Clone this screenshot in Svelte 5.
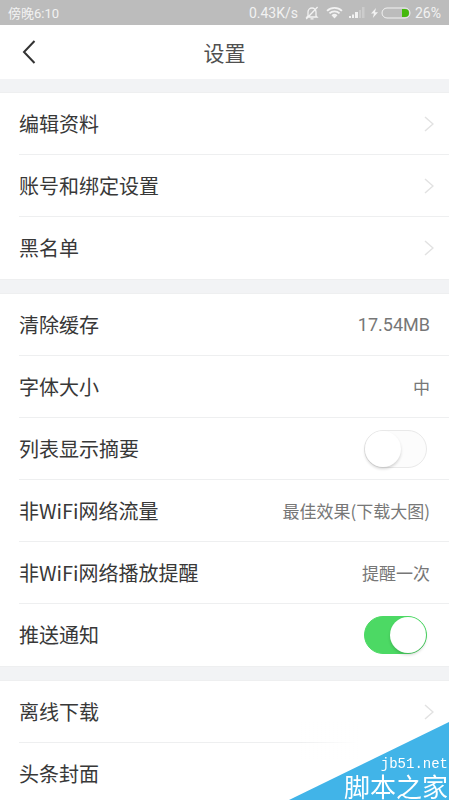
<script>
	let groups = $state([
		[
			{ label: '编辑资料', type: 'link' },
			{ label: '账号和绑定设置', type: 'link' },
			{ label: '黑名单', type: 'link' },
		],
		[
			{ label: '清除缓存', type: 'value', value: '17.54MB', latin: true },
			{ label: '字体大小', type: 'value', value: '中' },
			{ label: '列表显示摘要', type: 'switch', checked: false },
			{ label: '非WiFi网络流量', type: 'value', value: '最佳效果(下载大图)' },
			{ label: '非WiFi网络播放提醒', type: 'value', value: '提醒一次' },
			{ label: '推送通知', type: 'switch', checked: true },
		],
		[
			{ label: '离线下载', type: 'link' },
			{ label: '头条封面', type: 'link' },
		],
	]);
</script>

<div class="status">
	<span class="time">傍晚6:10</span>
	<span class="speed">0.43K/s</span>
	<svg class="bell" width="14" height="14" viewBox="0 0 14 14" aria-hidden="true">
		<path d="M3 10V6a4 4 0 0 1 8 0v4l1 1H2zM5.5 12.8h3M12.6 1L1.2 13" />
	</svg>
	<svg class="wifi" width="17" height="13" viewBox="0 0 18 14" aria-hidden="true">
		<path d="M1 5.2a11.5 11.5 0 0 1 16 0M3.6 8a7.6 7.6 0 0 1 10.8 0" />
		<path class="solid" d="M5.8 10a4.6 4.6 0 0 1 6.4 0L9 13.4z" />
	</svg>
	<svg class="signal" width="16" height="11" viewBox="0 0 16 11" aria-hidden="true">
		<path d="M0 9h2v2H0zM3 7.500h2V11H3zM6 5h3v6H6z" />
		<path class="dim" d="M10 3h2v8h-2zM13 0h2.500v11H13z" />
	</svg>
	<svg class="battery" width="40" height="12" viewBox="0 0 40 12" aria-hidden="true">
		<path class="bolt" d="M5 1L0 6.600h3L1.800 11 7 5.200H4z" />
		<rect class="shell" x="11" y="1" width="28" height="10" rx="5" />
		<path class="charge" d="M31 2h3a4 4 0 0 1 0 8h-3z" />
	</svg>
	<span class="percent">26%</span>
</div>

<header>
	<button class="back" aria-label="返回">
		<svg width="14" height="24" viewBox="0 0 14 24" aria-hidden="true">
			<path d="M12.500 1L2 12l10.500 11" />
		</svg>
	</button>
	<h1>设置</h1>
</header>

<main>
	{#each groups as group}
		<section>
			{#each group as item}
				{#if item.type === 'switch'}
					<label class="row">
						<span>{item.label}</span>
						<input type="checkbox" role="switch" bind:checked={item.checked}>
					</label>
				{:else}
					<button class="row">
						<span>{item.label}</span>
						{#if item.type === 'link'}
							<svg class="arrow" width="10" height="16" viewBox="0 0 10 16" aria-hidden="true">
								<path d="M1 1l8 7-8 7" />
							</svg>
						{:else}
							<span class="value" class:latin={item.latin}>{item.value}</span>
						{/if}
					</button>
				{/if}
			{/each}
		</section>
	{/each}
</main>

<div class="watermark">
	<span class="site">jb51.net</span>
	<span class="name">脚本之家</span>
</div>

<style>
	:global(html) {
		scrollbar-width: none;
	}

	:global(body) {
		background: #f2f3f5;
		color: #383838;
		font-family: "Noto Sans CJK SC", sans-serif;
	}

	.status {
		display: flex;
		align-items: center;
		height: 25px;
		padding: 0 8px;
		background: #bcbcbc;
		color: #f2f2f2;
		font: 13px Roboto, "Noto Sans CJK SC", sans-serif;
	}

	.time {
		flex: 1;
	}

	.speed,
	.percent {
		font-size: 14px;
	}

	.status svg {
		fill: #f2f2f2;
	}

	.bell {
		margin-left: 7px;
	}

	.status .bell path,
	.status .wifi path {
		fill: none;
		stroke: #f2f2f2;
		stroke-width: 1.3;
	}

	.wifi {
		margin-left: 7px;
	}

	.status .wifi path {
		stroke-width: 2;
	}

	.status .wifi .solid {
		fill: #f2f2f2;
		stroke: none;
	}

	.signal {
		margin-left: 6px;
	}

	.status .dim {
		opacity: 0.3;
	}

	.battery {
		margin: 0 4px 0 6px;
	}

	.status .shell {
		fill: none;
		stroke: #f2f2f2;
	}

	.status .charge {
		fill: #44b80c;
	}

	header {
		display: grid;
		grid-template-columns: 60px 1fr 60px;
		align-items: center;
		height: 54px;
		background: #fff;
	}

	h1 {
		grid-column: 2;
		margin: 0;
		color: #505050;
		font-size: 21px;
		font-weight: 400;
		line-height: 30px;
		text-align: center;
	}

	button {
		border: 0;
		background: none;
		color: inherit;
		font: inherit;
		cursor: pointer;
	}

	.back {
		display: flex;
		padding: 12px 22px;
	}

	.back path {
		fill: none;
		stroke: #333;
		stroke-width: 2;
	}

	section {
		margin-top: 13px;
		padding-left: 19px;
		border: solid #eeeff0;
		border-width: 1px 0;
		background: #fff;
	}

	.row {
		display: flex;
		align-items: center;
		justify-content: space-between;
		box-sizing: border-box;
		width: 100%;
		height: 62px;
		padding: 0 19px 0 0;
		border-bottom: 1px solid #eeeff0;
		font-size: 20px;
		line-height: 30px;
		text-align: left;
	}

	.row:last-child {
		border-bottom-color: transparent;
	}

	.row:has(.arrow) {
		padding-right: 15px;
	}

	.row:has(input) {
		padding-right: 22px;
	}

	.arrow path {
		fill: none;
		stroke: #e2e2e2;
		stroke-width: 1.5;
	}

	.value {
		color: #777;
		font-size: 17px;
	}

	.latin {
		font-family: Roboto, sans-serif;
		font-size: 18px;
	}

	input {
		appearance: none;
		display: flex;
		box-sizing: border-box;
		width: 63px;
		height: 38px;
		margin: 0;
		border: 1px solid #e9e9e9;
		border-radius: 19px;
		background: #fcfcfc;
		cursor: pointer;
	}

	input::before {
		content: "";
		width: 36px;
		height: 36px;
		border-radius: 50%;
		background: #fff;
		box-shadow: 0 2px 3px rgba(0, 0, 0, 0.16);
	}

	input:checked {
		justify-content: flex-end;
		border-color: #4cd964;
		background: #4cd964;
	}

	.watermark {
		position: fixed;
		right: 0;
		bottom: 0;
		display: flex;
		flex-direction: column;
		align-items: flex-end;
		justify-content: flex-end;
		box-sizing: border-box;
		width: 160px;
		height: 78px;
		padding-right: 1px;
		color: #fff;
		pointer-events: none;
	}

	/* blue corner */
	.watermark::before {
		content: "";
		position: absolute;
		inset: 0;
		z-index: -1;
		background: #41b4e8;
		clip-path: polygon(100% 0, 100% 100%, 0 100%);
	}

	/* pale glow that fades the divider out beside the corner */
	.watermark::after {
		content: "";
		position: absolute;
		inset: 0 0 40px 10px;
		z-index: -2;
		background: linear-gradient(to right, transparent, #fff 60px);
	}

	.watermark {
		z-index: 1;
	}

	.site {
		font: 14px/16px "Liberation Mono", monospace;
	}

	.name {
		font-size: 26px;
		line-height: 28px;
	}
</style>
